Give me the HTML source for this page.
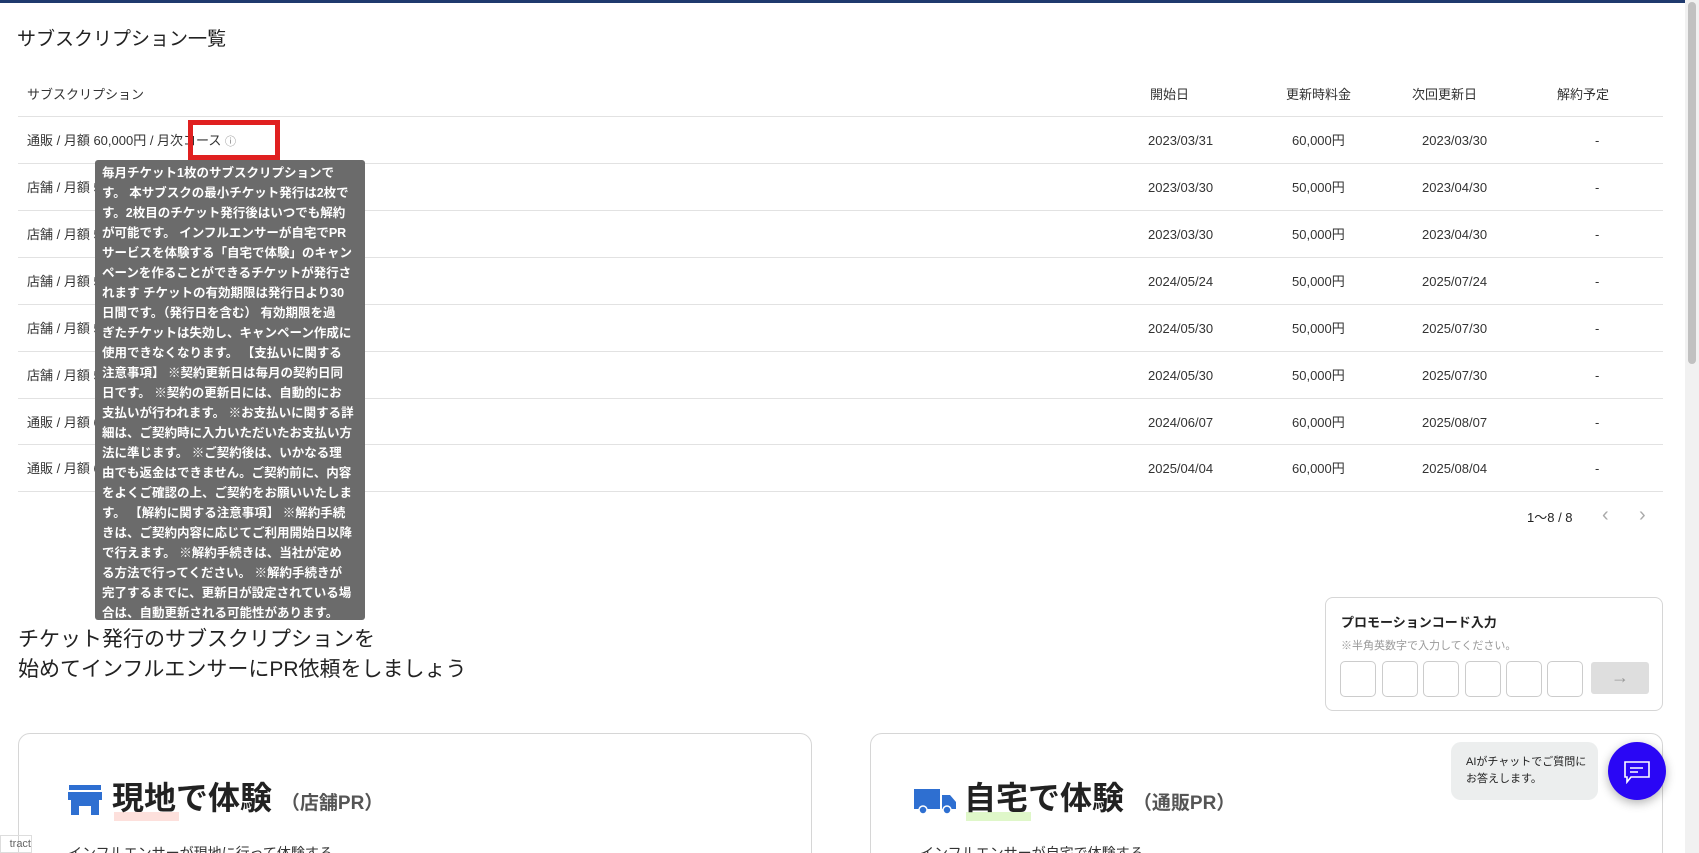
<!DOCTYPE html><html><head><meta charset="utf-8"><style>
*{margin:0;padding:0;box-sizing:border-box}
html,body{width:1699px;height:853px;overflow:hidden}
body{background:#fff;font-family:"Liberation Sans","Noto Sans CJK JP",sans-serif;color:#222;position:relative}
.a{position:absolute}
.top{left:0;top:0;width:1699px;height:3px;background:#1f3a6e}
.sb{left:1685px;top:0;width:14px;height:853px;background:#f1f1f1}
.th{top:84px;font-size:13px;color:#333}
.row{left:18px;width:1645px;height:47px;border-top:1px solid #e2e2e2;font-size:13px;color:#333}
.row span{position:absolute;top:0;line-height:47px;height:47px}
.tip{left:95px;top:160px;width:270px;height:460px;background:#6b6b6b;border-radius:3px;color:#fff;font-weight:bold;font-size:12.5px;line-height:20px;padding:3px 0 0 7px;white-space:nowrap}
.box{border:1px solid #d6d6d6;border-radius:8px}
.cell{width:36px;height:36px;border:1px solid #ccc;border-radius:5px;top:661px}
</style></head><body>
<div class="a top"></div>
<div class="a" style="left:17px;top:24px;font-size:19px;">サブスクリプション一覧</div>
<div class="a th" style="left:27px">サブスクリプション</div>
<div class="a th" style="left:1150px">開始日</div>
<div class="a th" style="left:1286px">更新時料金</div>
<div class="a th" style="left:1412px">次回更新日</div>
<div class="a th" style="left:1557px">解約予定</div>

<div class="a row" style="top:116px"><span style="left:9px">通販 / 月額 60,000円 / 月次コース <span style="position:static;color:#888;font-size:11px">ⓘ</span></span><span style="left:1130px">2023/03/31</span><span style="left:1274px">60,000円</span><span style="left:1404px">2023/03/30</span><span style="left:1577px">-</span></div>
<div class="a row" style="top:163px"><span style="left:9px">店舗 / 月額 50,000円</span><span style="left:1130px">2023/03/30</span><span style="left:1274px">50,000円</span><span style="left:1404px">2023/04/30</span><span style="left:1577px">-</span></div>
<div class="a row" style="top:210px"><span style="left:9px">店舗 / 月額 50,000円</span><span style="left:1130px">2023/03/30</span><span style="left:1274px">50,000円</span><span style="left:1404px">2023/04/30</span><span style="left:1577px">-</span></div>
<div class="a row" style="top:257px"><span style="left:9px">店舗 / 月額 50,000円</span><span style="left:1130px">2024/05/24</span><span style="left:1274px">50,000円</span><span style="left:1404px">2025/07/24</span><span style="left:1577px">-</span></div>
<div class="a row" style="top:304px"><span style="left:9px">店舗 / 月額 50,000円</span><span style="left:1130px">2024/05/30</span><span style="left:1274px">50,000円</span><span style="left:1404px">2025/07/30</span><span style="left:1577px">-</span></div>
<div class="a row" style="top:351px"><span style="left:9px">店舗 / 月額 50,000円</span><span style="left:1130px">2024/05/30</span><span style="left:1274px">50,000円</span><span style="left:1404px">2025/07/30</span><span style="left:1577px">-</span></div>
<div class="a row" style="top:398px"><span style="left:9px">通販 / 月額 60,000円</span><span style="left:1130px">2024/06/07</span><span style="left:1274px">60,000円</span><span style="left:1404px">2025/08/07</span><span style="left:1577px">-</span></div>
<div class="a row" style="top:444px;border-bottom:1px solid #e2e2e2;height:48px"><span style="left:9px">通販 / 月額 60,000円</span><span style="left:1130px">2025/04/04</span><span style="left:1274px">60,000円</span><span style="left:1404px">2025/08/04</span><span style="left:1577px">-</span></div>

<div class="a" style="left:188px;top:120px;width:92px;height:40px;border:5px solid #e02020"></div>
<div class="a tip">毎月チケット1枚のサブスクリプションで<br>す。 本サブスクの最小チケット発行は2枚で<br>す。2枚目のチケット発行後はいつでも解約<br>が可能です。 インフルエンサーが自宅でPR<br>サービスを体験する「自宅で体験」のキャン<br>ペーンを作ることができるチケットが発行さ<br>れます チケットの有効期限は発行日より30<br>日間です。（発行日を含む） 有効期限を過<br>ぎたチケットは失効し、キャンペーン作成に<br>使用できなくなります。 【支払いに関する<br>注意事項】 ※契約更新日は毎月の契約日同<br>日です。 ※契約の更新日には、自動的にお<br>支払いが行われます。 ※お支払いに関する詳<br>細は、ご契約時に入力いただいたお支払い方<br>法に準じます。 ※ご契約後は、いかなる理<br>由でも返金はできません。ご契約前に、内容<br>をよくご確認の上、ご契約をお願いいたしま<br>す。 【解約に関する注意事項】 ※解約手続<br>きは、ご契約内容に応じてご利用開始日以降<br>で行えます。 ※解約手続きは、当社が定め<br>る方法で行ってください。 ※解約手続きが<br>完了するまでに、更新日が設定されている場<br>合は、自動更新される可能性があります。</div>

<div class="a" style="left:1527px;top:507px;font-size:13px">1〜8 / 8</div>
<div class="a" style="left:1602px;top:504px;font-size:20px;color:#aaa">‹</div>
<div class="a" style="left:1639px;top:504px;font-size:20px;color:#aaa">›</div>

<div class="a" style="left:18px;top:625px;font-size:21px;line-height:30px">チケット発行のサブスクリプションを<br>始めてインフルエンサーにPR依頼をしましょう</div>

<div class="a box" style="left:1325px;top:597px;width:338px;height:114px"></div>
<div class="a" style="left:1341px;top:612px;font-size:13px;font-weight:bold">プロモーションコード入力</div>
<div class="a" style="left:1341px;top:637px;font-size:11px;color:#999">※半角英数字で入力してください。</div>
<div class="a cell" style="left:1340px"></div><div class="a cell" style="left:1382px"></div><div class="a cell" style="left:1423px"></div><div class="a cell" style="left:1465px"></div><div class="a cell" style="left:1506px"></div><div class="a cell" style="left:1547px"></div>
<div class="a" style="left:1591px;top:662px;width:58px;height:32px;background:#dedede;border-radius:3px;color:#999;font-size:18px;text-align:center;line-height:31px">→</div>

<div class="a box" style="left:18px;top:733px;width:794px;height:140px;border-radius:12px"></div>
<div class="a box" style="left:870px;top:733px;width:793px;height:140px;border-radius:12px"></div>
<svg class="a" style="left:68px;top:785px" width="34" height="30"><rect x="1" y="0" width="32" height="5" fill="#2e6fd1"/><rect x="0" y="7" width="34" height="8" fill="#2e6fd1"/><path d="M3 15h28v15H3z M11 21h12v9H11z" fill="#2e6fd1" fill-rule="evenodd"/></svg>
<div class="a" style="left:114px;top:812px;width:65px;height:9px;background:#fde0dc"></div>
<div class="a" style="left:112px;top:778px;font-size:32px;font-weight:bold;line-height:40px">現地で体験 <span style="font-size:19px;color:#555">（店舗PR）</span></div>
<svg class="a" style="left:914px;top:785px" width="42" height="30"><path d="M0 4h26v20H0z M28 10h8l6 7v7H28z" fill="#2e6fd1"/><circle cx="9" cy="25" r="4" fill="#2e6fd1" stroke="#fff" stroke-width="1.5"/><circle cx="33" cy="25" r="4" fill="#2e6fd1" stroke="#fff" stroke-width="1.5"/></svg>
<div class="a" style="left:966px;top:812px;width:65px;height:9px;background:#dff7c9"></div>
<div class="a" style="left:964px;top:778px;font-size:32px;font-weight:bold;line-height:40px">自宅で体験 <span style="font-size:19px;color:#555">（通販PR）</span></div>
<div class="a" style="left:68px;top:843px;font-size:14px;color:#333">インフルエンサーが現地に行って体験する</div>
<div class="a" style="left:920px;top:843px;font-size:14px;color:#333">インフルエンサーが自宅で体験する</div>

<div class="a" style="left:1451px;top:742px;width:147px;height:58px;background:#eceeee;border-radius:10px;font-size:11px;line-height:17px;padding:12px 10px 0 15px;white-space:nowrap">AIがチャットでご質問に<br>お答えします。</div>
<div class="a" style="left:1608px;top:742px;width:58px;height:58px;border-radius:50%;background:#2a06f5;box-shadow:0 3px 10px rgba(0,0,0,.3)"></div>
<svg class="a" style="left:1623px;top:760px" width="28" height="24"><path d="M2 2h24v15H8l-4 5v-5H2z" fill="none" stroke="#fff" stroke-width="1.6"/><path d="M7 8h13M7 12h8" stroke="#fff" stroke-width="1.6"/></svg>
<div class="a" style="left:0;top:835px;width:32px;height:18px;border:1px solid #ddd;font-size:11px;color:#666;line-height:16px;overflow:hidden;text-align:right">tract</div>
<div class="a sb"></div>
<div class="a" style="left:1688px;top:2px;width:8px;height:362px;background:#c1c1c1;border-radius:4px"></div>
</body></html>
